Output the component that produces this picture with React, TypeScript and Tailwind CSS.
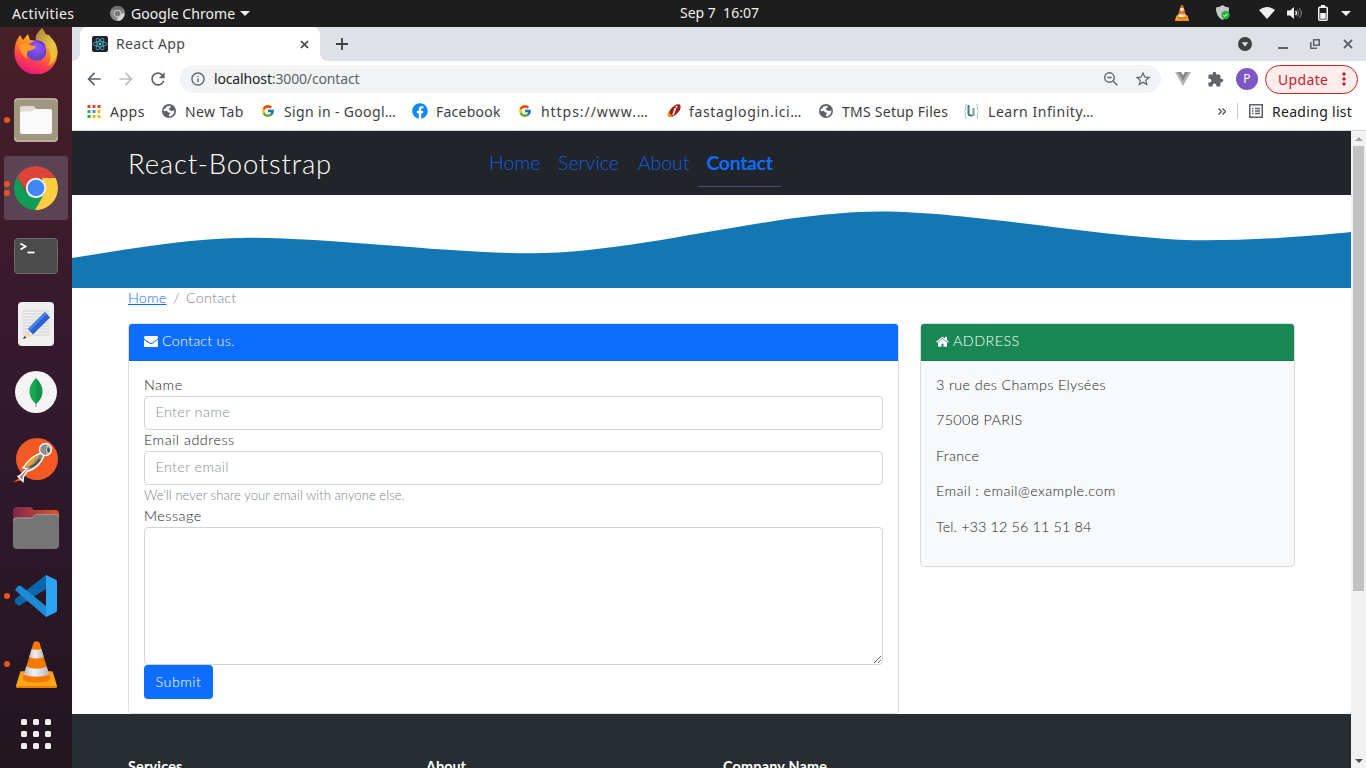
import type { ReactNode } from "react";
import { FcGoogle } from "react-icons/fc";
import { FaReact, FaFacebook } from "react-icons/fa";
import {
  MdArrowBack,
  MdArrowForward,
  MdRefresh,
  MdInfoOutline,
  MdStarBorder,
  MdExtension,
} from "react-icons/md";

/* ---------- desktop top bar ---------- */

function Cone({ className }: { className: string }) {
  return (
    <svg viewBox="0 0 42 48" className={className}>
      <defs>
        <linearGradient id="coneBase" x1="0" y1="0" x2="0" y2="1">
          <stop offset="0" stopColor="#ff9a1a" />
          <stop offset="1" stopColor="#ffab12" />
        </linearGradient>
        <linearGradient id="coneWhite" x1="0" y1="0" x2="1" y2="0">
          <stop offset="0" stopColor="#bdbdbd" />
          <stop offset="0.4" stopColor="#f2f2f2" />
          <stop offset="1" stopColor="#b5b5b5" />
        </linearGradient>
      </defs>
      <path d="M5.500 31h31q1 0 1.300 1L42 46q0 2-1.500 2h-39Q0 48 0 46l4.200-14q.3-1 1.300-1z" fill="url(#coneBase)" />
      <path d="M1 46h40v2H1z" fill="#f07c00" />
      <path d="M18 1.500q3-2.500 6 0L35 38q-1 4.500-14 4.500T7 38z" fill="#f57900" />
      <path d="M16 8q5 2 10 0l2.600 8.500q-7.600 2.500-15.200 0z" fill="url(#coneWhite)" />
      <path d="M10.500 26q10.500 4.500 21 0l2.600 8.500q-13.100 4-26.200 0z" fill="url(#coneWhite)" />
    </svg>
  );
}

function TopBar() {
  return (
    <header className="flex h-[27px] shrink-0 items-center bg-[#1d1d1d] font-['Noto_Sans',sans-serif] text-[14px] leading-[27px] text-[#f0f0f0]">
      <div className="w-[110px] pl-3 tracking-[0.400px]">Activities</div>
      <div className="flex w-[570px] items-center">
        <svg viewBox="0 0 16 16" className="mr-[6px] h-[15px] w-[15px]">
          <circle cx="8" cy="8" r="8" fill="#8a8a8a" />
          <path d="M8 8H15.500A8 8 0 0 1 8 16z" fill="#d5d5d5" />
          <path d="M1 4A8 8 0 0 1 15 4H8z" fill="#6f6f6f" />
          <circle cx="8" cy="8" r="4" fill="#c9c9c9" />
          <circle cx="8" cy="8" r="3" fill="#777" />
        </svg>
        <span className="tracking-[0.060px]">Google Chrome</span>
        <svg viewBox="0 0 10 5" className="ml-[5px] h-[5px] w-[10px]">
          <path d="M0 0h10L5 5z" fill="#f0f0f0" />
        </svg>
      </div>
      <div className="w-[495px] pb-px leading-[26px] whitespace-pre">Sep 7  16:07</div>
      <Cone className="mb-px h-4 w-[14px]" />
      <svg viewBox="0 0 16 16" className="mb-px ml-[26px] h-4 w-4">
        <path d="M1 2.500Q5 2 7.500 0 10 2 14 2.500 14.500 11 7.500 15 .5 11 1 2.500z" fill="#c9c9c9" />
        <circle cx="10.500" cy="10" r="4.200" fill="#27b341" />
        <path d="M8.500 10l1.500 1.500 2.500-3" stroke="#fff" fill="none" />
      </svg>
      <svg viewBox="0 0 16 12" className="mb-px ml-[28px] h-3 w-4">
        <path d="M0 3Q8-3 16 3L8 12z" fill="#f0f0f0" />
      </svg>
      <svg viewBox="0 0 15 12" className="mb-px ml-[12px] h-3 w-[15px]">
        <path d="M0 3.500h3L7 0v12L3 8.500H0z" fill="#f0f0f0" />
        <path d="M8.500 4q2 2 0 4" stroke="#f0f0f0" fill="none" strokeWidth="1.300" />
        <path d="M10.300 2.500q3 3.500 0 7M12.300 1q4 5 0 10" stroke="#8a8a8a" fill="none" />
      </svg>
      <svg viewBox="0 0 10 16" className="mb-[2px] ml-[16px] h-4 w-[10px]">
        <path d="M3 0h4v2H3z" fill="#f0f0f0" />
        <rect x=".75" y="2.200" width="8.500" height="13" rx="1" fill="none" stroke="#f0f0f0" strokeWidth="1.500" />
        <path d="M2.200 8h5.600v5.800H2.200z" fill="#f0f0f0" />
      </svg>
      <svg viewBox="0 0 10 5" className="ml-[13px] h-[5px] w-[10px]">
        <path d="M0 0h10L5 5z" fill="#f0f0f0" />
      </svg>
    </header>
  );
}

/* ---------- dock ---------- */

function DockItem({ dots = 0, active = false, children }: { dots?: number; active?: boolean; children: ReactNode }) {
  return (
    <div className={active ? "relative flex h-16 w-16 shrink-0 items-center justify-center rounded-[3px] bg-[#5b4353]" : "relative flex h-16 w-16 shrink-0 items-center justify-center"}>
      {dots > 0 && (
        <div className="absolute inset-y-0 left-0 flex flex-col items-center justify-center gap-[3px]">
          {Array.from({ length: dots }, (_, i) => (
            <span key={i} className="h-[6px] w-[6px] rounded-full bg-[#e95420]" />
          ))}
        </div>
      )}
      {children}
    </div>
  );
}

function Firefox() {
  return (
    <svg viewBox="0 0 46 46" className="mb-[3px] h-[46px] w-[46px]">
      <defs>
        <linearGradient id="fxBody" x1="0.8" y1="0" x2="0.35" y2="1">
          <stop offset="0" stopColor="#ffd83a" />
          <stop offset="0.4" stopColor="#ff8a1f" />
          <stop offset="0.72" stopColor="#ff3b50" />
          <stop offset="1" stopColor="#e3157f" />
        </linearGradient>
        <radialGradient id="fxGlobe" cx="0.5" cy="0.3" r="0.7">
          <stop offset="0" stopColor="#9059ff" />
          <stop offset="1" stopColor="#5b3fc0" />
        </radialGradient>
        <linearGradient id="fxTail" x1="0" y1="0" x2="1" y2="1">
          <stop offset="0" stopColor="#a8843a" />
          <stop offset="0.6" stopColor="#e9c344" />
          <stop offset="1" stopColor="#ffb52d" />
        </linearGradient>
      </defs>
      <path d="M7 7l3 5 5-6 2 6 10 1 6-2 3-4 6 9q3 5 2.500 10A21.500 21.500 0 0 1 1.500 24Q1.500 14 7 7z" fill="url(#fxBody)" />
      <path d="M29 0q-8 7-6 13 10 1 13 8 4 9-1 17 9-5 9.500-15-1-8-6-13l-3-3-3-1q-1-3-3.500-6z" fill="url(#fxTail)" />
      <circle cx="23.500" cy="23" r="10" fill="url(#fxGlobe)" />
      <path d="M6 17q3-2 8-1 4 2 9 2-1 4-8 5-2 2-1 8-7-5-8-14z" fill="#ff9b26" />
      <path d="M20 12q10-1 13 6-2-1-4-1 0-1-9-5z" fill="#6a3bd6" />
    </svg>
  );
}

function Dock() {
  return (
    <nav className="flex w-[72px] shrink-0 flex-col items-center gap-1 overflow-hidden bg-linear-to-b from-[#471f28] via-[#33182e] to-[#22161f]">
      <div className="-mt-[7px]">
        <DockItem>
          <Firefox />
        </DockItem>
      </div>
      <DockItem dots={1}>
        <svg viewBox="0 0 44 44" className="h-11 w-11">
          <rect width="44" height="44" rx="4" fill="#9f977f" />
          <path d="M1 4q0-3 3-3h36q3 0 3 3" stroke="#c4bda9" fill="none" />
          <path d="M1 39q0 4 3 4h36q3 0 3-4" stroke="#b9b19b" fill="none" strokeWidth="2" />
          <path d="M6 10q0-2 2-2h11q2 0 3 3h-1v6H6z" fill="#e0ddd2" />
          <path d="M6 15.500q0-2 2-2h10l3-2.500h15q2 0 2 2V34q0 2-2 2H8q-2 0-2-2z" fill="#fafafa" />
        </svg>
      </DockItem>
      <DockItem active dots={2}>
        <svg viewBox="0 0 46 46" className="h-[46px] w-[46px]">
          <path d="M3.900 12A22 22 0 0 1 42.500 13H23L14 27z" fill="#db4437" />
          <path d="M3.900 12A22 22 0 0 0 22 45L31.500 29 14 28.500z" fill="#0f9d58" />
          <path d="M42.500 13A22 22 0 0 1 22 45L32 27.500 29 13z" fill="#ffcd40" />
          <circle cx="23" cy="23" r="10.200" fill="#f1f1f1" />
          <circle cx="23" cy="23" r="8.300" fill="#4285f4" />
        </svg>
      </DockItem>
      <DockItem>
        <svg viewBox="0 0 44 36" className="h-9 w-11">
          <rect x=".5" y=".5" width="43" height="35" rx="3.500" fill="#4b4b4b" stroke="#6f6d6d" />
          <path d="M6.500 5.500l5 3-5 3" stroke="#fff" strokeWidth="1.800" fill="none" />
          <path d="M13.500 14.500h7" stroke="#fff" strokeWidth="1.800" />
        </svg>
      </DockItem>
      <DockItem>
        <svg viewBox="0 0 36 44" className="h-11 w-9">
          <rect width="36" height="44" rx="4" fill="#efefef" />
          <path d="M4.500 9h27M4.500 12h27M4.500 15h27M4.500 18h27M4.500 21h27M4.500 24h27M4.500 27h27M4.500 30h27M4.500 33h27" stroke="#cfcfcf" />
          <path d="M5 37l4-8 4.500 5z" fill="#f5d7b8" />
          <path d="M5 37l1.500-3 1.700 2z" fill="#333" />
          <path d="M10 27L27 10l5 5.500L15 32.500z" fill="#2a62d0" />
          <path d="M10 27L27 10l1.800 2L12 29z" fill="#4c80e6" />
        </svg>
      </DockItem>
      <DockItem>
        <svg viewBox="0 0 44 44" className="h-11 w-11">
          <circle cx="22" cy="22" r="21" fill="#f4f4f4" />
          <path d="M22 32v5" stroke="#9a9a9a" strokeWidth="1.200" />
          <path d="M22 8q-7 6.500-6.500 14.500Q16 29 22 34z" fill="#17a94f" />
          <path d="M22 8q7 6.500 6.500 14.500Q28 29 22 34z" fill="#13934a" />
        </svg>
      </DockItem>
      <DockItem>
        <svg viewBox="0 0 46 46" className="h-[46px] w-[46px]">
          <circle cx="24" cy="22" r="21" fill="#f15a24" />
          <path d="M0 45l8-5 3 3z" fill="#f15a24" />
          <path d="M28 16q-11 4-18 15l4 .5-7 7-2 1 5 5 .5-5 3.500-5q13-4 17-16z" fill="#8a8a8a" stroke="#fff" strokeWidth="1.400" />
          <path d="M27 17.500q-10 4-15 12l5-.5z" fill="#f9a01b" />
          <path d="M27 22q-4 6-10 8" stroke="#4c4c4c" strokeWidth="2" fill="none" />
          <circle cx="32.500" cy="12.500" r="6" fill="#8f8f8f" stroke="#fff" strokeWidth="1.300" />
          <path d="M34.500 9q4 2 3 6l-3 1.500q-2-4 0-7.500z" fill="#4c4c4c" stroke="#fff" strokeWidth=".8" />
        </svg>
      </DockItem>
      <DockItem>
        <svg viewBox="0 0 46 42" className="h-[42px] w-[46px]">
          <defs>
            <linearGradient id="folderBack" x1="0" y1="0" x2="1" y2="0">
              <stop offset="0" stopColor="#7d2750" />
              <stop offset="1" stopColor="#e95420" />
            </linearGradient>
          </defs>
          <path d="M0 4q0-4 4-4h13q2 0 3.500 3H42q4 0 4 4v15H0z" fill="url(#folderBack)" />
          <path d="M0 14q0-3.500 3.500-3.500H19l4-3.500h19.500Q46 7 46 10.500V38q0 4-4 4H4q-4 0-4-4z" fill="#757575" />
          <path d="M.5 14q0-3 3-3H19l4-3.500h19.500q3 0 3 3" fill="none" stroke="#a5a5a5" strokeWidth=".8" />
        </svg>
      </DockItem>
      <DockItem dots={1}>
        <svg viewBox="0 0 42 42" className="h-[42px] w-[42px]">
          <path d="M31 0v14L4 31l-4-3v-4z" fill="#0b66ab" />
          <path d="M3 11q1.500-1 3 0l25 20v11L0 15z" fill="#1c8ad6" />
          <path d="M31 0l9.500 4.500Q42 5 42 7v28q0 2-1.500 2.500L31 42z" fill="#2ba3f2" />
        </svg>
      </DockItem>
      <DockItem dots={1}>
        <Cone className="h-[47px] w-[41px]" />
      </DockItem>
      <DockItem>
        <div className="mt-[4px] grid grid-cols-3 gap-[6px]">
          {Array.from({ length: 9 }, (_, i) => (
            <span key={i} className="h-[6px] w-[6px] rounded-[1.500px] bg-[#eeeeec]" />
          ))}
        </div>
      </DockItem>
    </nav>
  );
}

/* ---------- browser chrome ---------- */

function TabStrip() {
  return (
    <div className="flex h-[34px] shrink-0 bg-[#dee1e6]">
      <div className="flex w-2 items-end bg-white">
        <span className="h-[34px] w-2 rounded-br-[8px] bg-[#dee1e6]" />
      </div>
      <div className="bg-[#dee1e6]">
        <div className="flex h-[34px] w-[240px] items-center rounded-t-[8px] bg-white pl-3">
          <span className="flex h-4 w-4 items-center justify-center rounded-[2px] bg-[#20232a]">
            <FaReact className="h-[14px] w-[14px] text-[#55c5e0]" />
          </span>
          <span className="ml-2 w-[184px] pb-[2px] text-[14px] tracking-[0.350px] text-[#45494d]">React App</span>
          <svg viewBox="0 0 9 9" className="h-[9px] w-[9px]">
            <path d="M1 1l7 7M8 1L1 8" stroke="#3c4043" strokeWidth="1.700" />
          </svg>
        </div>
      </div>
      <div className="flex w-2 bg-white">
        <span className="h-[34px] w-2 rounded-bl-[8px] bg-[#dee1e6]" />
      </div>
      <div className="flex flex-1 items-center">
        <svg viewBox="0 0 12 12" className="ml-2 h-3 w-3">
          <path d="M6 0v12M0 6h12" stroke="#3c4043" strokeWidth="1.800" />
        </svg>
      </div>
      <div className="flex w-[128px] items-center">
        <svg viewBox="0 0 14 14" className="h-[14px] w-[14px]">
          <circle cx="7" cy="7" r="7" fill="#3c4043" />
          <path d="M3.700 5.200h6.600L7 9.700z" fill="#dee1e6" />
        </svg>
        <svg viewBox="0 0 10 10" className="ml-[26px] h-[10px] w-[10px]">
          <path d="M0 9h10" stroke="#5f6368" strokeWidth="2" />
        </svg>
        <svg viewBox="0 0 10 10" className="ml-[22px] h-[10px] w-[10px]">
          <path d="M3.700 .8h5.500v5.500H3.700zM.8 3v6.200H7" fill="none" stroke="#5f6368" strokeWidth="1.600" />
        </svg>
        <svg viewBox="0 0 10 10" className="ml-[23px] h-[10px] w-[10px]">
          <path d="M1 1l8 8M9 1L1 9" stroke="#5f6368" strokeWidth="1.800" />
        </svg>
      </div>
    </div>
  );
}

function Toolbar() {
  return (
    <div className="flex h-[37px] shrink-0 items-center bg-white pb-px text-[#5f6368]">
      <MdArrowBack className="ml-3 h-5 w-5" />
      <MdArrowForward className="ml-3 h-5 w-5 text-[#babcbe]" />
      <MdRefresh className="ml-3 h-5 w-5" />
      <div className="ml-3 flex h-7 w-[981px] items-center rounded-full bg-[#f1f3f4]">
        <MdInfoOutline className="ml-[10px] h-4 w-4" />
        <span className="ml-2 flex-1 pb-px text-[14px] tracking-[-0.150px]">
          <span className="text-[#202124]">localhost</span>:3000/contact
        </span>
        <svg viewBox="0 0 14 14" className="h-[14px] w-[14px]" fill="none" stroke="#5f6368" strokeWidth="1.400">
          <circle cx="5.500" cy="5.500" r="4.700" />
          <path d="M9 9l4.300 4.300M3.300 5.500h4.400" />
        </svg>
        <MdStarBorder className="mr-[9px] ml-[16px] h-[18px] w-[18px]" />
      </div>
      <svg viewBox="0 0 16 14" className="ml-[14px] h-[14px] w-4">
        <path d="M0 0h6l2 3.500L10 0h6L8 14z" fill="#b4b4b4" />
        <path d="M3 0h3l2 3.500L10 0h3L8 8.700z" fill="#868686" />
      </svg>
      <MdExtension className="ml-4 h-[17px] w-[17px]" />
      <span className="ml-[12px] flex h-[22px] w-[22px] items-center justify-center rounded-full bg-[#7e57c2] text-[12px] text-white">P</span>
      <div className="ml-[7px] flex h-[29px] w-[93px] items-center rounded-full border border-[#c5221f] bg-[#fcedec] pl-3 text-[14px] tracking-[0.350px] text-[#c5221f]">
        <span className="w-[64px]">Update</span>
        <svg viewBox="0 0 4 14" className="h-[14px] w-1">
          <circle cx="2" cy="2" r="1.700" fill="#c5221f" />
          <circle cx="2" cy="7" r="1.700" fill="#c5221f" />
          <circle cx="2" cy="12" r="1.700" fill="#c5221f" />
        </svg>
      </div>
    </div>
  );
}

function Globe() {
  return (
    <svg viewBox="0 0 14 14" className="h-[14px] w-[14px]">
      <circle cx="7" cy="7" r="7" fill="#5f6368" />
      <path d="M1.500 5.500Q4 4.500 4.500 2.500L8 1.800 9 3 7 4.500v1.200L9.500 7 12.300 6.500Q12.500 9 11 10.500L8.500 12.400 6.800 12.200 7.300 10 8.500 9 6 8.200 4.800 6.700 2 7.200z" fill="#fff" />
    </svg>
  );
}

function BookmarksBar() {
  const item = "flex items-center gap-[9px]";
  return (
    <div className="flex h-[33px] shrink-0 items-center border-b border-[#d6d8db] bg-white pb-[6px] pl-[15px] text-[14px] tracking-[0.250px] whitespace-nowrap text-[#3c4043]">
      <div className={item + " w-[75px] tracking-[0.500px]"}>
        <svg viewBox="0 0 13 13" className="h-[13px] w-[14px]">
          <path d="M0 0h3v3H0zM5 0h3v3H5zM10 0h3v3h-3z" fill="#ea4335" />
          <path d="M0 5h3v3H0zM0 10h3v3H0z" fill="#34a853" />
          <path d="M5 5h3v3H5z" fill="#4285f4" />
          <path d="M10 5h3v3h-3zM5 10h3v3H5zM10 10h3v3h-3z" fill="#fbbc05" />
        </svg>
        Apps
      </div>
      <div className={item + " w-[99px] tracking-[0.400px]"}>
        <Globe />
        New Tab
      </div>
      <div className={item + " w-[151px] tracking-[0.350px]"}>
        <FcGoogle className="h-[14px] w-[14px]" />
        Sign in - Googl…
      </div>
      <div className="flex w-[106px] items-center gap-2">
        <FaFacebook className="h-4 w-4 text-[#1289f5]" />
        Facebook
      </div>
      <div className={item + " w-[149px] tracking-[0.950px]"}>
        <FcGoogle className="h-[14px] w-[14px]" />
        https://www.…
      </div>
      <div className="flex w-[152px] items-center gap-2 tracking-[0.650px]">
        <svg viewBox="0 0 14 14" className="h-[14px] w-[14px]">
          <path d="M3 6Q8-1 13 .5q2 4-2 8-4 5-8 4-3-1 0-6.500z" fill="#a51d20" />
          <path d="M2 7q-3 5 0 6 3 0 4-1-3-1-4-5z" fill="#ef8d1f" />
          <path d="M8.500 4L6 11M7 5.500h2" stroke="#fff" strokeWidth="1.500" />
          <circle cx="9.500" cy="2.800" r="1" fill="#fff" />
        </svg>
        fastaglogin.ici…
      </div>
      <div className={item + " w-[145px]"}>
        <Globe />
        TMS Setup Files
      </div>
      <div className="flex flex-1 items-center gap-[9px] tracking-[0.550px]">
        <svg viewBox="0 0 15 15" className="h-[15px] w-[15px]" fill="none">
          <path d="M3 0Q1.500 0 1.500 2v4L.3 7.500 1.500 9v4q0 2 1.500 2M12 0q1.500 0 1.500 2v4l1.200 1.500L13.500 9v4q0 2-1.500 2" stroke="#a9c9c5" />
          <path d="M4.500 1v8q0 2.500 2.500 2.500h1.500" stroke="#3b7f83" strokeWidth="2" />
          <path d="M9.500 4v8" stroke="#7c9c9e" strokeWidth="2" />
        </svg>
        Learn Infinity…
      </div>
      <svg viewBox="0 0 8 7" className="h-[7px] w-2">
        <path d="M.5 .5l3 3-3 3M4.500 .5l3 3-3 3" stroke="#4d5156" strokeWidth="1.300" fill="none" />
      </svg>
      <span className="ml-[11px] h-4 w-px bg-[#c9cbce]" />
      <svg viewBox="0 0 14 14" className="mr-[9px] ml-[11px] h-[14px] w-[14px]">
        <path d="M.75 .75h12.500v12.500H.75z" fill="none" stroke="#5f6368" strokeWidth="1.500" />
        <path d="M3 4.500h1.500M3 7h1.500M3 9.500h1.500M6 4.500h5M6 7h5M6 9.500h5" stroke="#5f6368" strokeWidth="1.300" />
      </svg>
      <span className="w-[94px] tracking-[0.300px] text-[#202124]">Reading list</span>
    </div>
  );
}

/* ---------- web page ---------- */

function Navbar() {
  return (
    <div className="flex h-16 shrink-0 bg-[#212529] pl-14">
      <div className="w-[352px] pt-[15px] text-[27.500px] leading-[36px] font-light tracking-[0.800px] text-white">React-Bootstrap</div>
      <div className="flex pt-[17px] pl-[9px] text-[19.500px] leading-[30px] font-light text-[#0d5fe0]">
        <span className="w-[69px] tracking-[0.100px]">Home</span>
        <span className="w-[80px] tracking-[0.050px]">Service</span>
        <span className="w-[60px] tracking-[-0.100px]">About</span>
        <span className="h-[39px] w-[83px] border-b border-[#534a8a] text-center font-bold tracking-[-0.350px] text-[#0d6efd]">Contact</span>
      </div>
    </div>
  );
}

function FieldLabel({ children }: { children: ReactNode }) {
  return <label className="block h-[21px] leading-[19px] tracking-[0.500px]">{children}</label>;
}

function ContactCard() {
  const field = "block w-full rounded-[4px] border border-[#ced4da] bg-white px-[10.500px] pb-[3px] placeholder:text-[#868e96] placeholder:opacity-100 outline-none tracking-[0.350px]";
  return (
    <section className="h-[391px] w-[771px] rounded-[4px] border border-[#dfdfdf]">
      <div className="flex h-[37px] items-center rounded-t-[3px] border-b border-[#0c63e4] bg-[#0d6efd] pb-[2px] pl-[15px] text-white">
        <svg viewBox="0 0 1792 1792" className="mr-1 h-[14px] w-[14px]" fill="currentColor">
          <path d="M1792 710v794q0 66-47 113t-113 47H160q-66 0-113-47T0 1504V710q44 49 101 87 362 246 497 345 57 42 92.500 65.500t94.500 48 110 24.500h2q51 0 110-24.500t94.500-48 92.500-65.500q170-123 498-345 57-39 100-87zm0-294q0 79-49 151t-122 123q-376 261-468 325-10 7-42.500 31t-54 38.500-52 32.500-57.500 27-50 9h-2q-23 0-50-9t-57.500-27-52-32.500-54-38.500-42.500-31q-91-64-262-182.500T172 690q-62-42-117-115.500T0 438q0-78 41.500-130T160 256h1472q65 0 112.500 47t47.500 113z" />
        </svg>
        Contact us.
      </div>
      <form className="px-[15px] pt-[14px]">
        <FieldLabel>Name</FieldLabel>
        <input className={field + " h-[34px]"} placeholder="Enter name" />
        <FieldLabel>Email address</FieldLabel>
        <input className={field + " h-[34px]"} placeholder="Enter email" />
        <div className="h-[21px] text-[13px] leading-[21px] tracking-[0.070px] text-[#7b838a]">We'll never share your email with anyone else.</div>
        <FieldLabel>Message</FieldLabel>
        <textarea className={field + " h-[138px] resize"} />
        <button type="button" className="block h-[34px] w-[69px] rounded-[4px] bg-[#0d6efd] tracking-[0.450px] text-white">
          Submit
        </button>
      </form>
    </section>
  );
}

function AddressCard() {
  return (
    <section className="h-[244px] w-[375px] rounded-[4px] border border-[#d9dadb] bg-[#f8f9fa]">
      <div className="flex h-[37px] items-center rounded-t-[3px] border-b border-[#177a4c] bg-[#198754] pb-[2px] pl-[15px] tracking-[0.400px] text-white">
        <svg viewBox="0 64 1664 1600" className="mr-1 h-[13px] w-[13px]" fill="currentColor">
          <path d="M1408 992v480q0 26-19 45t-45 19H960v-384H704v384H320q-26 0-45-19t-19-45V992q0-1 .5-3t.5-3l575-474 575 474q1 2 1 6zm223-69l-62 74q-8 9-21 11h-3q-13 0-21-7L832 424 140 1001q-12 8-24 7-13-2-21-11l-62-74q-8-10-7-23.500t11-21.500l719-599q32-26 76-26t76 26l244 204V288q0-14 9-23t23-9h192q14 0 23 9t9 23v408l219 182q10 8 11 21.500t-7 23.500z" />
        </svg>
        ADDRESS
      </div>
      <div className="flex flex-col gap-[14px] px-[15px] pt-[12.600px] leading-[21.500px] tracking-[0.330px]">
        <p>3 rue des Champs Elysées</p>
        <p>75008 PARIS</p>
        <p>France</p>
        <p className="tracking-[0.400px]">Email : email@example.com</p>
        <p className="tracking-[0.130px]">Tel. +33 12 56 11 51 84</p>
      </div>
    </section>
  );
}

function Scrollbar() {
  return (
    <div className="flex w-[15px] shrink-0 flex-col items-center bg-[#f1f1f1]">
      <svg viewBox="0 0 8 4" className="mt-[6px] h-1 w-2">
        <path d="M4 0l4 4H0z" fill="#a3a3a3" />
      </svg>
      <div className="mt-[5px] h-[445px] w-[11px] bg-[#c1c1c1]" />
      <svg viewBox="0 0 8 4" className="mt-auto mb-[5px] h-1 w-2">
        <path d="M0 0h8L4 4z" fill="#505050" />
      </svg>
    </div>
  );
}

function Page() {
  return (
    <div className="flex h-[637px] shrink-0 overflow-hidden bg-white">
      <div className="flex w-[1279px] flex-col font-[Lato,sans-serif] text-[14.400px] font-light tracking-[0.200px] text-[#212529]">
        <Navbar />
        <svg viewBox="72 195 1279 93" className="block h-[93px] w-[1279px] shrink-0">
          <path d="M72 258C130 249 190 237.700 250 237.700C330 237.700 450 253.300 531 253.300C640 253.300 770 211.500 882 211.500C970 211.500 1120 240.300 1204 240.300C1260 240.300 1310 236 1351 232V288H72Z" fill="#1277b3" />
        </svg>
        <div className="flex h-[35px] shrink-0 pl-14 leading-[19px] tracking-[0.200px] text-[#7b838a]">
          <span className="w-[39px] text-[#0d6efd] underline">Home</span>
          <span className="w-[19px] text-center">/</span>
          <span>Contact</span>
        </div>
        <div className="flex shrink-0 items-start gap-[21px] pl-14">
          <ContactCard />
          <AddressCard />
        </div>
        <footer className="flex flex-1 bg-[#282d31] pt-[42px] pl-14 leading-[21px] font-bold text-white">
          <div className="w-[298px]">Services</div>
          <div className="w-[297px] tracking-normal">About</div>
          <div>Company Name</div>
        </footer>
      </div>
      <Scrollbar />
    </div>
  );
}

export default function App() {
  return (
    <div className="flex h-[768px] w-[1366px] flex-col overflow-hidden">
      <TopBar />
      <div className="flex h-[741px]">
        <Dock />
        <main className="flex w-[1294px] flex-col font-['Noto_Sans',sans-serif]">
          <TabStrip />
          <Toolbar />
          <BookmarksBar />
          <Page />
        </main>
      </div>
    </div>
  );
}
